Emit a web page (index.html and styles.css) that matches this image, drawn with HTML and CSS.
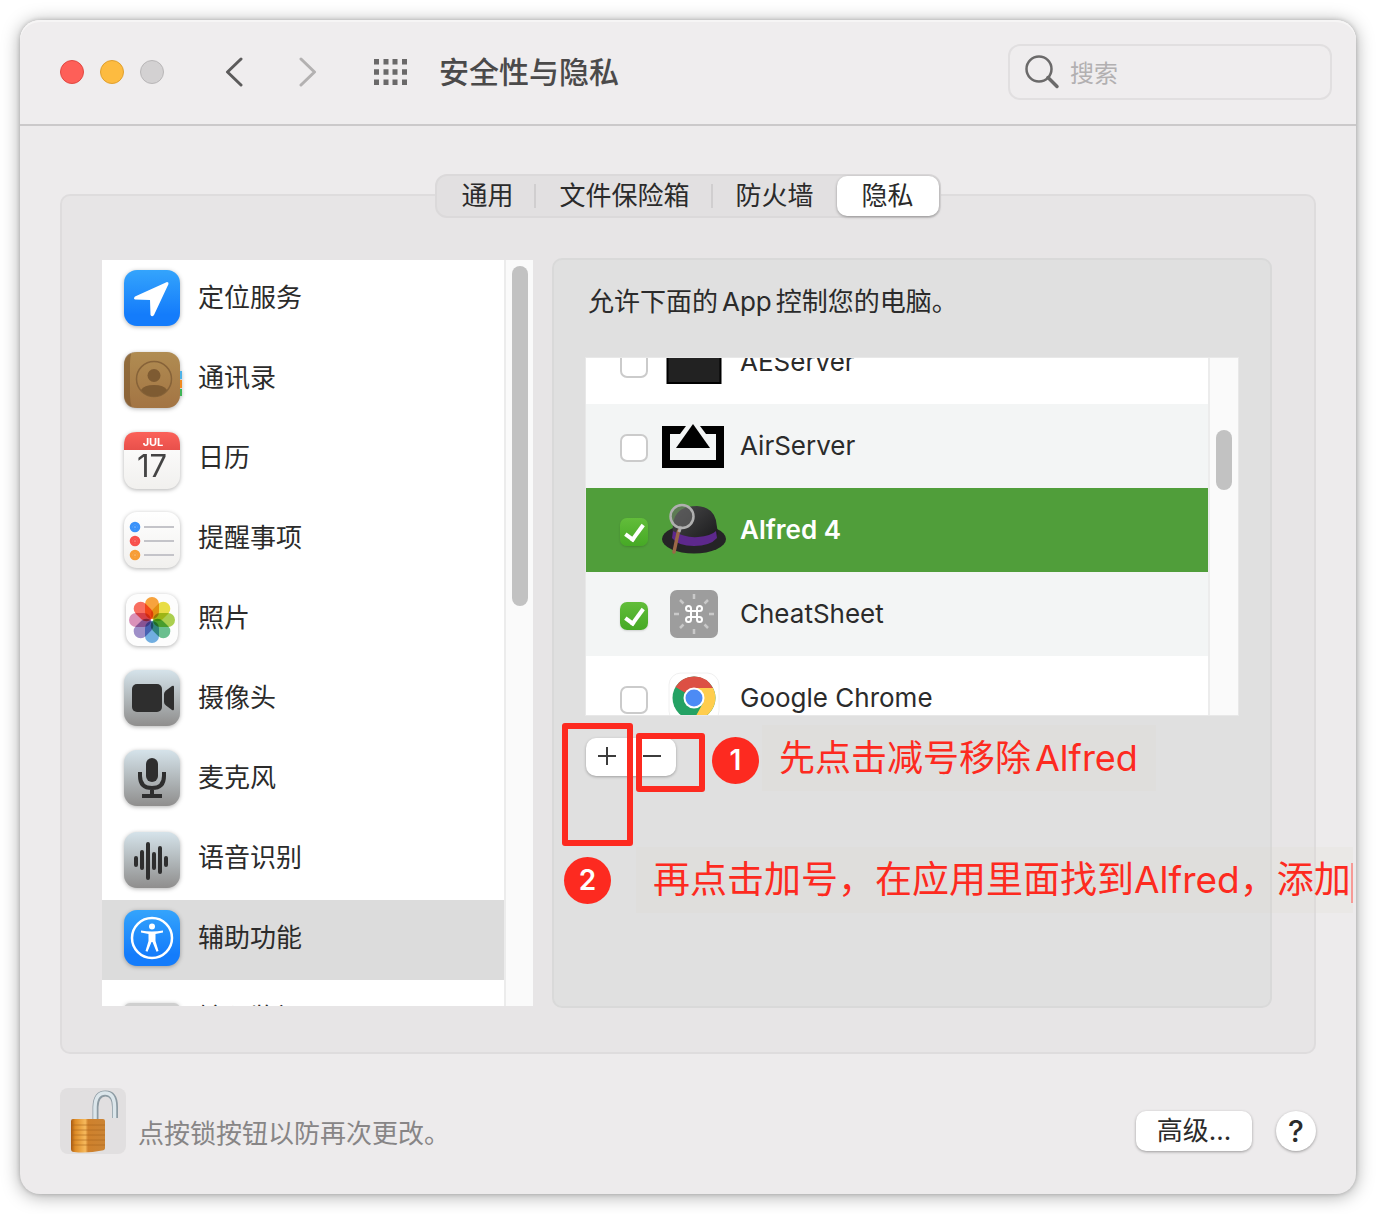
FILE: index.html
```html
<!doctype html>
<html lang="zh-CN">
<head>
<meta charset="utf-8">
<meta name="viewport" content="width=device-width,initial-scale=1">
<title>安全性与隐私</title>
<link rel="stylesheet" href="styles.css">
</head>
<body>

<svg class="defs" width="0" height="0" aria-hidden="true">
	<defs>
		<linearGradient id="gBlue" x1="0" y1="0" x2="0" y2="1"><stop offset="0" stop-color="#34a4fc"/><stop offset=".8" stop-color="#147cfb"/></linearGradient>
		<linearGradient id="gGray" x1="0" y1="0" x2="0" y2="1"><stop offset="0" stop-color="#d5e3ea"/><stop offset="1" stop-color="#8f8e8d"/></linearGradient>
		<linearGradient id="gBrown" x1="0" y1="0" x2="0" y2="1"><stop offset="0" stop-color="#b08c52"/><stop offset="1" stop-color="#a37443"/></linearGradient>
		<linearGradient id="gPaper" x1="0" y1="0" x2="0" y2="1"><stop offset="0" stop-color="#ffffff"/><stop offset="1" stop-color="#f1f0ee"/></linearGradient>
		<linearGradient id="gRed" x1="0" y1="0" x2="0" y2="1"><stop offset="0" stop-color="#fb6159"/><stop offset="1" stop-color="#e8504b"/></linearGradient>
		<linearGradient id="gBrass" x1="0" y1="0" x2="1" y2="0"><stop offset="0" stop-color="#a85a12"/><stop offset=".12" stop-color="#dd8b26"/><stop offset=".42" stop-color="#f6b95c"/><stop offset=".5" stop-color="#cf812c"/><stop offset="1" stop-color="#cb8434"/></linearGradient>
		<linearGradient id="gHat" x1="0" y1="0" x2="1" y2="1"><stop offset="0" stop-color="#4a4a4c"/><stop offset="1" stop-color="#161617"/></linearGradient>
	</defs>
</svg>

<main class="window">

	<header class="titlebar">
		<div class="lights">
			<button class="light red" aria-label="关闭"></button>
			<button class="light yellow" aria-label="最小化"></button>
			<button class="light gray" aria-label="缩放" disabled></button>
		</div>
		<div class="nav">
			<button class="icon-btn" aria-label="后退"><svg width="20" height="30" viewBox="0 0 20 30"><path d="M17 2 3.500 15 17 28" fill="none" stroke="#5c5b5b" stroke-width="3" stroke-linecap="round" stroke-linejoin="round"/></svg></button>
			<button class="icon-btn" aria-label="前进"><svg width="20" height="30" viewBox="0 0 20 30"><path d="M4 2 17.500 15 4 28" fill="none" stroke="#b3b1b1" stroke-width="3" stroke-linecap="round" stroke-linejoin="round"/></svg></button>
		</div>
		<button class="icon-btn" aria-label="显示全部"><svg width="36" height="28" viewBox="0 0 36 28"><path d="M3.500 1v26M13 1v26M22 1v26M31.500 1v26" fill="none" stroke="#6a6969" stroke-width="5" stroke-dasharray="5.500 4.700"/></svg></button>
		<h1 class="title">安全性与隐私</h1>
		<label class="search">
			<svg width="36" height="36" viewBox="0 0 36 36" fill="none" stroke="#6b6a6a"><circle cx="15" cy="15" r="12.500" stroke-width="2.500"/><path d="m24 23.500 9 9" stroke-width="3.500" stroke-linecap="round"/></svg>
			<input type="search" placeholder="搜索" aria-label="搜索">
		</label>
	</header>

	<div class="content">

		<div class="tabs" role="tablist">
			<button class="tab" role="tab">通用</button>
			<button class="tab" role="tab">文件保险箱</button>
			<button class="tab" role="tab">防火墙</button>
			<button class="tab active" role="tab" aria-selected="true">隐私</button>
		</div>

		<section class="panel">

			<div class="sidebar">
				<ul class="services">
					<li><button class="service">
						<svg class="app-icon" viewBox="0 0 60 64"><rect x="2" y="2" width="56" height="56" rx="13" fill="url(#gBlue)"/><path d="M45 14 13 28.500q-2 2 0 3l15 .5.500 15q1.500 2.500 3.500 0L46.500 16q.3-2-1.500-2z" fill="#fff"/></svg>
						<span>定位服务</span></button></li>
					<li><button class="service">
						<svg class="app-icon" viewBox="0 0 60 64"><path d="M57 23h3v8h-3z" fill="#4db2e8"/><path d="M57 32h3v8h-3z" fill="#f08a20"/><path d="M57 41h3v7h-3z" fill="#3fb556"/><rect x="2" y="4" width="56" height="56" rx="13" fill="url(#gBrown)"/><path d="M15 4q-13 0-13 13v30q0 13 13 13h-5q-2-7-2-12V16q0-8 2-12z" fill="#7d5930" opacity=".6"/><circle cx="32" cy="31" r="17.500" fill="none" stroke="#876339" stroke-width="1.500"/><circle cx="32" cy="27.500" r="6.500" fill="#7e5b32"/><path d="M19 42q3-5 13-5t13 5q-5 6.500-13 6.500T19 42z" fill="#7e5b32"/></svg>
						<span>通讯录</span></button></li>
					<li><button class="service">
						<svg class="app-icon" viewBox="0 0 60 64"><rect x="2" y="4" width="56" height="57" rx="13" fill="url(#gPaper)"/><path d="M2 22v-5Q2 4 15 4h30q13 0 13 13v5z" fill="url(#gRed)"/><text class="cal-month" x="31" y="18">JUL</text><text class="cal-day" x="30" y="49">17</text></svg>
						<span>日历</span></button></li>
					<li><button class="service">
						<svg class="app-icon" viewBox="0 0 60 64"><rect x="2" y="4" width="56" height="56" rx="13" fill="url(#gPaper)"/><path d="M22 19h30M22 33h30M22 47h30" stroke="#c4c4c9" stroke-width="2"/><g stroke-width="3" fill="none"><g stroke="#3b93fa"><circle cx="13" cy="19" r="3.800"/><circle cx="13" cy="19" r="1"/></g><g stroke="#f8504c"><circle cx="13" cy="33" r="3.800"/><circle cx="13" cy="33" r="1"/></g><g stroke="#f79d35"><circle cx="13" cy="47" r="3.800"/><circle cx="13" cy="47" r="1"/></g></g></svg>
						<span>提醒事项</span></button></li>
					<li><button class="service">
						<svg class="app-icon" viewBox="0 0 60 64"><rect x="4" y="6" width="52" height="52" rx="12" fill="#fdfdfd"/><g class="petals" transform="translate(30 32)"><rect x="-7" y="-23" width="14" height="22" rx="7" fill="#f99a27"/><rect x="-7" y="-23" width="14" height="22" rx="7" fill="#e8dc30" transform="rotate(45)"/><rect x="-7" y="-23" width="14" height="22" rx="7" fill="#a4cc3c" transform="rotate(90)"/><rect x="-7" y="-23" width="14" height="22" rx="7" fill="#5bba83" transform="rotate(135)"/><rect x="-7" y="-23" width="14" height="22" rx="7" fill="#62a8e0" transform="rotate(180)"/><rect x="-7" y="-23" width="14" height="22" rx="7" fill="#9584c4" transform="rotate(225)"/><rect x="-7" y="-23" width="14" height="22" rx="7" fill="#d987b4" transform="rotate(270)"/><rect x="-7" y="-23" width="14" height="22" rx="7" fill="#fa5f50" transform="rotate(315)"/></g></svg>
						<span>照片</span></button></li>
					<li><button class="service">
						<svg class="app-icon" viewBox="0 0 60 64"><rect x="2" y="2" width="56" height="56" rx="13" fill="url(#gGray)"/><rect x="10" y="16" width="30" height="28" rx="5" fill="#2e2e2e"/><path d="M42 26q0-2 2-3.500l6-4.500q2-1 2 1v22q0 2-2 1l-6-4.500q-2-1.500-2-3.500z" fill="#2e2e2e"/></svg>
						<span>摄像头</span></button></li>
					<li><button class="service">
						<svg class="app-icon" viewBox="0 0 60 64"><rect x="2" y="2" width="56" height="56" rx="13" fill="url(#gGray)"/><rect x="24" y="10" width="12" height="24" rx="6" fill="#2e2e2e"/><path d="M18 24v4q0 12 12 12t12-12v-4M30 40v8M20 48h20" fill="none" stroke="#2e2e2e" stroke-width="4"/></svg>
						<span>麦克风</span></button></li>
					<li><button class="service">
						<svg class="app-icon" viewBox="0 0 60 64"><rect x="2" y="4" width="56" height="56" rx="13" fill="url(#gGray)"/><path d="M14 30v7M20 24v16M26 16v34M32 26v14M38 20v24M44 30v7" fill="none" stroke="#2e2e2e" stroke-width="4" stroke-linecap="round"/></svg>
						<span>语音识别</span></button></li>
					<li><button class="service selected">
						<svg class="app-icon" viewBox="0 0 60 64"><rect x="2" y="2" width="56" height="56" rx="13" fill="url(#gBlue)"/><circle cx="30" cy="30" r="20" fill="none" stroke="#fff" stroke-width="2.500"/><circle cx="30" cy="18.500" r="3" fill="#fff"/><path d="M19 22.500q11 2 22 0v2l-7.500 1.500v7l3 10-2 .8L30.500 34h-1l-4 9.800-2-.8 3-10v-7L19 24.500z" fill="#fff"/></svg>
						<span>辅助功能</span></button></li>
					<li><button class="service">
						<svg class="app-icon" viewBox="0 0 60 64"><rect x="2" y="15" width="56" height="46" rx="6" fill="#cfcfcf"/></svg>
						<span>输入监视</span></button></li>
				</ul>
				<div class="scrollbar"><div class="thumb"></div></div>
			</div>

			<div class="detail">
				<p class="lead">允许下面的<span class="latin">App</span>控制您的电脑。</p>

				<div class="app-list">
					<ul class="apps">
						<li><label class="app">
							<input type="checkbox">
							<svg width="64" height="60" viewBox="0 0 64 60"><rect x="5.500" y="-1" width="53" height="52" fill="#222" stroke="#000" stroke-width="2"/></svg>
							<span>AEServer</span></label></li>
						<li><label class="app alt">
							<input type="checkbox">
							<svg width="64" height="60" viewBox="0 0 64 60"><path d="M0 10h24l-6 8H8v26h46V18H44l-6-8h24v42H0z"/><path d="m31 8 17 24H14z"/></svg>
							<span>AirServer</span></label></li>
						<li><label class="app chosen">
							<input type="checkbox" checked>
							<svg width="64" height="60" viewBox="0 0 64 60"><ellipse cx="32" cy="39" rx="32" ry="14.500" fill="#252426"/><path d="M11 34Q8 6 35 6q19 1 20 21l1 7q-8 12-26 11-14-1-19-11z" fill="url(#gHat)"/><path d="M11 31q12 7 25 6t18-6l1 7q-7 8-23 8T10 38z" fill="#5d288c"/><path d="M16.500 31 12 52" stroke="#9b6848" stroke-width="3.500" stroke-linecap="round"/><path d="m19 26-2 6" stroke="#aaa" stroke-width="3"/><circle cx="20" cy="16.500" r="11.500" fill="#666" fill-opacity=".6" stroke="#b0b0b0" stroke-width="2.500"/></svg>
							<span>Alfred 4</span></label></li>
						<li><label class="app alt">
							<input type="checkbox" checked>
							<svg width="64" height="60" viewBox="0 0 64 60"><rect x="8" y="6" width="48" height="48" rx="7" fill="#9d9d9d"/><path d="M32 10v5M32 45v5M12 30h5M47 30h5M18 16l3.500 3.500M42.500 40.500 46 44M46 16l-3.500 3.500M21.500 40.500 18 44" stroke="#c9c9c9" stroke-width="2.500"/><path d="M29 27h6v6h-6zM29 27v-2.500a2.500 2.500 0 1 0-2.500 2.500zM35 27h2.500a2.500 2.500 0 1 0-2.500-2.500zM35 33v2.500a2.500 2.500 0 1 0 2.500-2.500zM29 33h-2.500a2.500 2.500 0 1 0 2.500 2.500z" fill="none" stroke="#fff" stroke-width="2"/></svg>
							<span>CheatSheet</span></label></li>
						<li><label class="app">
							<input type="checkbox">
							<svg width="64" height="60" viewBox="0 0 64 60"><rect x="7" y="5" width="50" height="50" rx="12" fill="#fff" stroke="#f0f0f0"/><circle cx="32" cy="30" r="21.500" fill="#24a264"/><path d="M32 30 13.500 19A21.500 21.500 0 0 1 51 20z" fill="#dc5044"/><path d="M32 20h19a21.500 21.500 0 0 1-19 31.500L41 35z" fill="#ffcd4d"/><circle cx="32" cy="30" r="10.500" fill="#fff"/><circle cx="32" cy="30" r="8.500" fill="#4c8bf5"/></svg>
							<span>Google Chrome</span></label></li>
					</ul>
					<div class="scrollbar"><div class="thumb"></div></div>
				</div>

				<div class="add-remove">
					<button aria-label="添加"><svg width="20" height="20" viewBox="0 0 20 20"><path d="M10 1v18M1 10h18" stroke="#3c3c3c" stroke-width="2"/></svg></button>
					<button aria-label="移除"><svg width="20" height="20" viewBox="0 0 20 20"><path d="M1 10h18" stroke="#3c3c3c" stroke-width="2"/></svg></button>
				</div>

				<!-- marks drawn over the pane -->
				<div class="mark mark-add"></div>
				<div class="mark mark-remove"></div>
				<div class="step step-one">1</div>
				<div class="note note-one">先点击减号移除<span class="latin">Alfred</span></div>
				<div class="step step-two">2</div>
				<div class="note note-two">再点击加号，在应用里面找到Alfred，添加<span class="caret"></span></div>
			</div>

		</section>

		<footer class="footer">
			<button class="lock" aria-label="锁">
				<svg width="66" height="66" viewBox="0 0 66 66"><path d="M35.500 34V19Q36 5.500 45.500 5.500T55 19v11" fill="none" stroke="#8d9ba3" stroke-width="6"/><path d="M35 34V19Q35.500 5 45 5t9.500 14v11" fill="none" stroke="#dce6eb" stroke-width="3.500"/><path d="M11 33q0-2 2-2h30q2 0 2 2v27q0 2-3 2.500-14 3-28 1.500-3 0-3-3z" fill="url(#gBrass)"/><path d="M12 37h33M12 42h33M12 47h33M12 52h33M12 57h33" stroke="#a8641c" stroke-width="1" opacity=".6"/></svg>
			</button>
			<p class="hint">点按锁按钮以防再次更改。</p>
			<button class="push">高级...</button>
			<button class="help" aria-label="帮助">?</button>
		</footer>

	</div>

</main>

</body>
</html>
```

FILE: styles.css
```css
*, ::before, ::after { box-sizing: border-box; }

body { background: #fff; color: #2b2b2b; font: 26px/32px Inter, "Noto Sans CJK SC", sans-serif; margin: 0; padding: 20px; }
button, input { color: inherit; font: inherit; }
button { background: none; border: none; margin: 0; padding: 0; }
h1, p, ul { margin: 0; padding: 0; }
ul { list-style: none; }
svg { display: block; }

.defs { position: absolute; }
.latin { margin: 0 4px; }

.window { background: #edebec; border-radius: 20px; box-shadow: 0 0 4px rgba(0,0,0,.2), 0 2px 18px rgba(0,0,0,.34); }

/* title bar */
.titlebar { align-items: center; background: #efedee; border-bottom: 2px solid #cbc9ca; border-radius: 20px 20px 0 0; box-shadow: inset 0 2px #f6f5f5; display: flex; height: 106px; padding: 0 24px 0 40px; }
.lights { display: flex; gap: 16px; }
.light { border: 1px solid; border-radius: 50%; height: 24px; width: 24px; }
.red { background: #fe5f58; border-color: #e14942; }
.yellow { background: #fdbb40; border-color: #e0a02f; }
.gray { background: #d3d1d2; border-color: #b9b7b8; }
.nav { display: flex; gap: 53px; margin: 0 56px 0 60px; }
.title { color: #4b4a4a; font-size: 30px; font-weight: 500; line-height: 40px; margin-left: 30px; }
.search { align-items: center; border: 2px solid #e1dfe0; border-radius: 12px; display: flex; gap: 10px; height: 56px; margin-left: auto; padding: 0 14px; width: 324px; }
.search svg { flex: none; }
.search input { background: none; border: none; flex: 1; font-size: 24px; min-width: 0; outline: none; padding: 3px 0 0; }
.search input::placeholder { color: #b2b0b1; }

.content { padding: 48px 40px 40px; }

/* tabs sit across the top edge of the panel */
.tabs { background: #e2e0e1; border: 2px solid #dbd9da; border-radius: 12px; display: flex; height: 44px; margin: 0 auto; padding-left: 1px; position: relative; width: max-content; z-index: 1; }
.tab { line-height: 38px; padding: 0 23px; position: relative; }
.tab:nth-child(-n+2)::after { background: #d0cecf; content: ""; height: 24px; position: absolute; right: 0; top: 8px; width: 2px; }
.tab.active { background: #fff; border-radius: 10px; box-shadow: 0 1px 3px rgba(0,0,0,.35); padding: 0 25px; }

.panel { background: #e7e5e6; border: 2px solid #dedcdd; border-radius: 10px; display: flex; gap: 19px; margin-top: -24px; padding: 62px 42px 44px 40px; }

/* service list */
.sidebar { background: #fff; display: flex; flex: none; height: 746px; margin: 2px 0; overflow: hidden; width: 431px; }
.services { flex: 1; }
.service { align-items: flex-start; display: flex; gap: 16px; height: 80px; padding: 8px 20px; text-align: left; width: 100%; }
.service span { padding-top: 14px; }
.selected { background: #dcdcdc; }
.app-icon { filter: drop-shadow(0 1px 2px rgba(0,0,0,.3)); flex: none; height: 64px; width: 60px; }
.cal-month { fill: #fff; font-size: 11px; font-weight: 700; text-anchor: middle; }
.cal-day { fill: #444; font-size: 31px; font-weight: 400; text-anchor: middle; }
.petals rect { mix-blend-mode: multiply; opacity: .9; }

.scrollbar { background: #fafafa; border-left: 2px solid #ececec; flex: none; padding: 6px; width: 29px; }
.thumb { background: #c2c2c2; border-radius: 8px; height: 340px; width: 16px; }

/* detail pane */
.detail { background: #e0e0e0; border: 2px solid #d9d9d9; border-radius: 10px; flex: 1; min-width: 0; padding: 26px 31px; position: relative; }
.lead { padding-left: 3px; }

.app-list { background: #fff; border: 1px solid #e8e8e8; display: flex; height: 359px; margin-top: 39px; overflow: hidden; }
.apps { flex: 1; margin-top: -38px; }
.app { align-items: center; display: flex; height: 84px; padding-left: 34px; }
.app svg { margin: 0 14px; }
.app span { padding-bottom: 1px; }
.alt { background: #f3f5f5; }
.chosen { background: #509e3a; color: #fff; font-weight: 600; }
.app input { appearance: none; background: #fff; border: 2px solid #cbcbcb; border-radius: 7px; height: 28px; margin: 4px 0 0; position: relative; width: 28px; }
.app input:checked { background: linear-gradient(#62bd3a, #46a925); border: none; box-shadow: 0 1px 2px rgba(0,0,0,.15); }
.app input:checked::after { border: solid #fff; border-width: 0 4px 4px 0; content: ""; height: 20px; left: 9px; position: absolute; top: 3px; transform: rotate(36deg); width: 11px; }
.app-list .scrollbar { width: 30px; }
.app-list .thumb { height: 60px; margin-top: 66px; }

.add-remove { background: #fff; border-radius: 10px; box-shadow: 0 1px 3px rgba(0,0,0,.3); display: flex; height: 38px; margin: 22px 0 0 1px; width: 90px; }
.add-remove button { align-items: center; display: flex; flex: 1; justify-content: center; padding: 0 3px 2px 0; }

.mark { border: 6px solid #fd2a20; border-radius: 3px; position: absolute; }
.mark-add { height: 123px; left: 8px; top: 463px; width: 71px; }
.mark-remove { height: 59px; left: 82px; top: 473px; width: 69px; }
.step { background: #fd2a20; border-radius: 50%; color: #fff; font-size: 28px; font-weight: 600; height: 47px; line-height: 46px; position: absolute; text-align: center; width: 47px; }
.step-one { left: 158px; top: 477px; }
.step-two { left: 10px; top: 597px; }
.note { background: rgba(222,214,200,.15); color: #fd2a20; font-size: 37px; line-height: 66px; padding: 0 17px; position: absolute; white-space: nowrap; }
.note-one { font-size: 36px; left: 208px; padding-right: 14px; top: 465px; }
.note-two { left: 82px; padding-right: 0; top: 587px; }
.caret { background: #f79a96; display: inline-block; height: 40px; vertical-align: middle; width: 2px; }

/* footer */
.footer { align-items: center; display: flex; margin-top: 34px; }
.lock { background: #e1dfe0; border-radius: 8px; }
.hint { color: #878586; flex: 1; padding: 26px 12px 0; }
.push { background: #fff; border-radius: 10px; box-shadow: 0 1px 3px rgba(0,0,0,.35); height: 40px; margin-top: 20px; width: 116px; }
.help { background: #fff; border-radius: 50%; box-shadow: 0 1px 3px rgba(0,0,0,.35); font-size: 30px; font-weight: 500; height: 40px; margin: 20px 0 0 24px; width: 40px; }
```
